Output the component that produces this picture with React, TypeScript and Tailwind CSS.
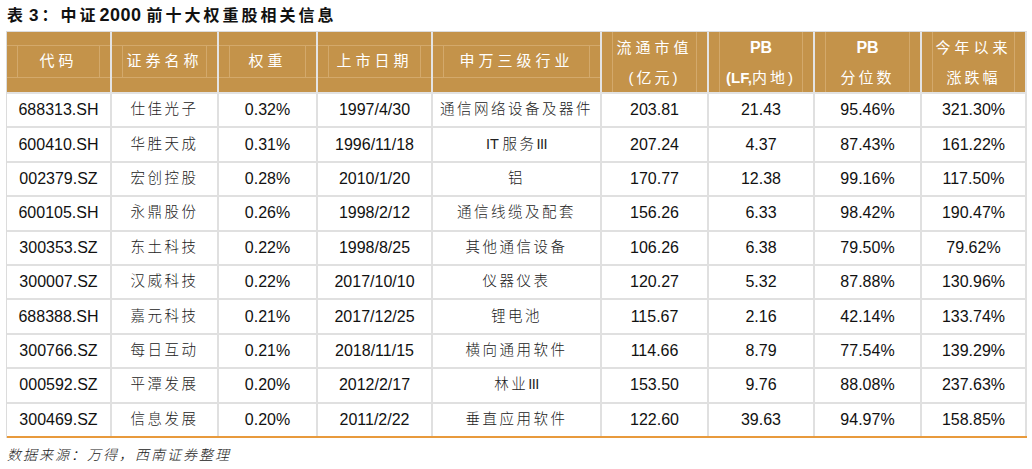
import React from "react";

const rows: React.ReactNode[][] = [
  ["688313.SH", "仕佳光子", "0.32%", "1997/4/30", "通信网络设备及器件", "203.81", "21.43", "95.46%", "321.30%"],
  [
    "600410.SH",
    "华胜天成",
    "0.31%",
    "1996/11/18",
    <span>
      <span className="tracking-normal">IT </span>服务<span className="tracking-[-0.5px]">III</span>
    </span>,
    "207.24",
    "4.37",
    "87.43%",
    "161.22%",
  ],
  ["002379.SZ", "宏创控股", "0.28%", "2010/1/20", "铝", "170.77", "12.38", "99.16%", "117.50%"],
  ["600105.SH", "永鼎股份", "0.26%", "1998/2/12", "通信线缆及配套", "156.26", "6.33", "98.42%", "190.47%"],
  ["300353.SZ", "东土科技", "0.22%", "1998/8/25", "其他通信设备", "106.26", "6.38", "79.50%", "79.62%"],
  ["300007.SZ", "汉威科技", "0.22%", "2017/10/10", "仪器仪表", "120.27", "5.32", "87.88%", "130.96%"],
  ["688388.SH", "嘉元科技", "0.21%", "2017/12/25", "锂电池", "115.67", "2.16", "42.14%", "133.74%"],
  ["300766.SZ", "每日互动", "0.21%", "2018/11/15", "横向通用软件", "114.66", "8.79", "77.54%", "139.29%"],
  [
    "000592.SZ",
    "平潭发展",
    "0.20%",
    "2012/2/17",
    <span>
      林业<span className="tracking-[-0.5px]">III</span>
    </span>,
    "153.50",
    "9.76",
    "88.08%",
    "237.63%",
  ],
  ["300469.SZ", "信息发展", "0.20%", "2011/2/22", "垂直应用软件", "122.60", "39.63", "94.97%", "158.85%"],
];

const cols = "grid grid-cols-[105px_107px_99px_115px_169px_107px_106px_107px_105px]";
const font = { fontFamily: '"Liberation Sans", "Noto Sans CJK SC", sans-serif' };

function SingleHead({ label }: { label: string }) {
  return (
    <div className="flex flex-col h-full border-r-2 border-[#e4e4e4]">
      <div className="h-[14px] border-b border-[#d3a96b]" />
      <div className="flex-1 px-[10px]">
        <div className="h-full border-x border-[#d3a96b] flex items-center justify-center text-[15px] tracking-[4px] text-white">
          {label}
        </div>
      </div>
      <div className="h-[15px] border-t border-[#d3a96b]" />
    </div>
  );
}

function DoubleHead({ top, bottom, boldTop }: { top: string; bottom: React.ReactNode; boldTop?: boolean }) {
  return (
    <div className="h-full border-r-2 border-[#e4e4e4] px-[10px]">
      <div className="h-full border-x border-[#d3a96b] flex flex-col items-center justify-center text-white gap-[7px]">
        <div className={boldTop ? "text-[16px] font-bold leading-[23px]" : "text-[15px] tracking-[4px] leading-[23px]"}>
          {top}
        </div>
        <div className="text-[15px] tracking-[3px] leading-[23px]">{bottom}</div>
      </div>
    </div>
  );
}

export default function App() {
  return (
    <div className="w-[1032px] h-[469px] bg-white text-[#111]" style={font}>
      {/* Title */}
      <div className="h-[31px] pl-[7px] flex items-center text-[16px] font-bold tracking-[3px] text-[#111]">
        <span>表</span>
        <span className="text-[17px] tracking-normal ml-[3px]">3</span>
        <span className="ml-[3px]">：中证</span>
        <span className="text-[18px] tracking-[0.5px] ml-[1px]">2000</span>
        <span className="ml-[5px]">前十大权重股相关信息</span>
      </div>

      <div className="ml-[6px] w-[1021px] border-l border-t border-[#dcdcdc]">
        {/* Header */}
        <div className={`${cols} h-[62px] bg-[#c4934a] border-b-2 border-[#e2e2e2]`}>
          <SingleHead label="代码" />
          <SingleHead label="证券名称" />
          <SingleHead label="权重" />
          <SingleHead label="上市日期" />
          <SingleHead label="申万三级行业" />
          <DoubleHead top="流通市值" bottom="(亿元)" />
          <DoubleHead
            top="PB"
            boldTop
            bottom={
              <span>
                <span className="font-bold tracking-normal">(LF,</span>内地)
              </span>
            }
          />
          <DoubleHead top="PB" boldTop bottom="分位数" />
          <DoubleHead top="今年以来" bottom="涨跌幅" />
        </div>

        {/* Body */}
        {rows.map((r, i) => (
          <div
            key={i}
            className={`${cols} h-[34.4px] border-b-2 ${i === rows.length - 1 ? "border-[#e89a3c]" : "border-[#e0e0e0]"}`}
          >
            {r.map((c, j) => (
              <div
                key={j}
                className={`flex items-center justify-center border-r-2 border-[#e0e0e0] ${
                  j === 1 || j === 4 ? "text-[14.5px] tracking-[2.5px] font-light text-[#222]" : "text-[16px]"
                }`}
              >
                {c}
              </div>
            ))}
          </div>
        ))}
      </div>

      {/* Source */}
      <div className="pl-[7px] pt-[7px] text-[14px] italic font-light tracking-[2px] text-[#222]">
        数据来源：万得，西南证券整理
      </div>
    </div>
  );
}
